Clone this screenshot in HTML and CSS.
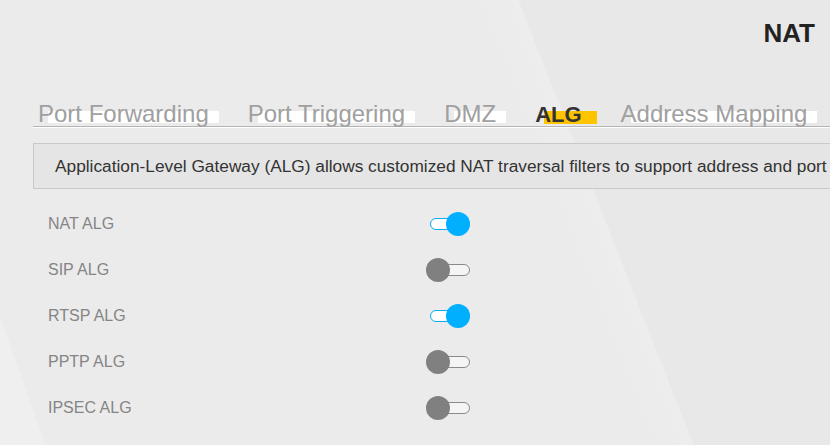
FILE: index.html
```html
<!DOCTYPE html>
<html>
<head>
  <title>NAT</title>
  <meta name="viewport" content="width=device-width, initial-scale=1.0">
  <link rel="stylesheet" href="styles.css">
</head>
<body>
  <h1 class="page-title">NAT</h1>

  <nav class="tabs">
    <span class="tab">Port Forwarding</span>
    <span class="tab">Port Triggering</span>
    <span class="tab">DMZ</span>
    <span class="tab active">ALG</span>
    <span class="tab">Address Mapping</span>
  </nav>

  <div class="intro">Application-Level Gateway (ALG) allows customized NAT traversal filters to support address and port</div>

  <ul class="alg-list">
    <li class="alg-row">
      <span class="alg-name">NAT ALG</span>
      <span class="switch on"><span class="track"></span><span class="knob"></span></span>
    </li>
    <li class="alg-row">
      <span class="alg-name">SIP ALG</span>
      <span class="switch"><span class="track"></span><span class="knob"></span></span>
    </li>
    <li class="alg-row">
      <span class="alg-name">RTSP ALG</span>
      <span class="switch on"><span class="track"></span><span class="knob"></span></span>
    </li>
    <li class="alg-row">
      <span class="alg-name">PPTP ALG</span>
      <span class="switch"><span class="track"></span><span class="knob"></span></span>
    </li>
    <li class="alg-row">
      <span class="alg-name">IPSEC ALG</span>
      <span class="switch"><span class="track"></span><span class="knob"></span></span>
    </li>
  </ul>
</body>
</html>
```

FILE: styles.css
```css
html, body {
  height: 100%;
}

body {
  margin: 0;
  overflow: hidden;
  font-family: "Liberation Sans", Arial, sans-serif;
  background-color: #ebebeb;
  /* faint diagonal panels behind the page */
  background-image:
    linear-gradient(70.6deg, #efefef 4.6%, rgba(239, 239, 239, 0) 4.6%),
    linear-gradient(68.5deg, #ebebeb 64%, #ededed 69%, #e8e8e8 69%);
}

.page-title {
  margin: 0;
  padding: 18px 15px 0 0;
  text-align: right;
  font-size: 26px;
  line-height: 30px;
  font-weight: bold;
  color: #222;
}

.tabs {
  display: flex;
  align-items: flex-end;
  gap: 39px;
  margin: 54px 0 0 33px;
  padding-left: 5px;
  border-bottom: 1px solid #b4b4b4;
  box-shadow: 0 1px 0 #fff;
  white-space: nowrap;
}

.tab {
  position: relative;
  z-index: 0;
  font-size: 24px;
  line-height: 24px;
  color: #a0a0a0;
}

.tab::before {
  content: "";
  position: absolute;
  z-index: -1;
  top: 9px;
  left: 10px;
  right: -10px;
  height: 12px;
  background-color: #fff;
}

.tab.active {
  font-size: 22px;
  line-height: 22px;
  font-weight: bold;
  color: #333;
}

.tab.active::before {
  top: 7px;
  left: 9px;
  right: -15px;
  height: 13px;
  background-color: #fec400;
}

.intro {
  margin: 16px 0 0 33px;
  padding-left: 21px;
  height: 44px;
  line-height: 44px;
  border: 1px solid #c9c9c9;
  border-right: none;
  background-color: #e5e5e5;
  font-size: 17.3px;
  color: #333;
  white-space: nowrap;
  overflow: hidden;
}

.alg-list {
  list-style: none;
  margin: 12px 0 0;
  padding: 0 0 0 48px;
}

.alg-row {
  display: flex;
  align-items: center;
  height: 46px;
}

.alg-name {
  width: 378px;
  font-size: 16px;
  color: #858585;
}

.switch {
  position: relative;
  display: inline-block;
  width: 44px;
  height: 24px;
}

.switch .track {
  position: absolute;
  top: 6px;
  left: 4px;
  width: 40px;
  height: 12px;
  box-sizing: border-box;
  border: 1.5px solid #8a8a8a;
  border-radius: 7px;
  background-color: #f4f4f4;
}

.switch .knob {
  position: absolute;
  top: 0;
  left: 0;
  width: 24px;
  height: 24px;
  border-radius: 50%;
  background-color: #808080;
}

.switch.on .track {
  border-color: #08acf4;
  background-color: #fff;
}

.switch.on .knob {
  left: 20px;
  background-color: #00b0ff;
}
```
